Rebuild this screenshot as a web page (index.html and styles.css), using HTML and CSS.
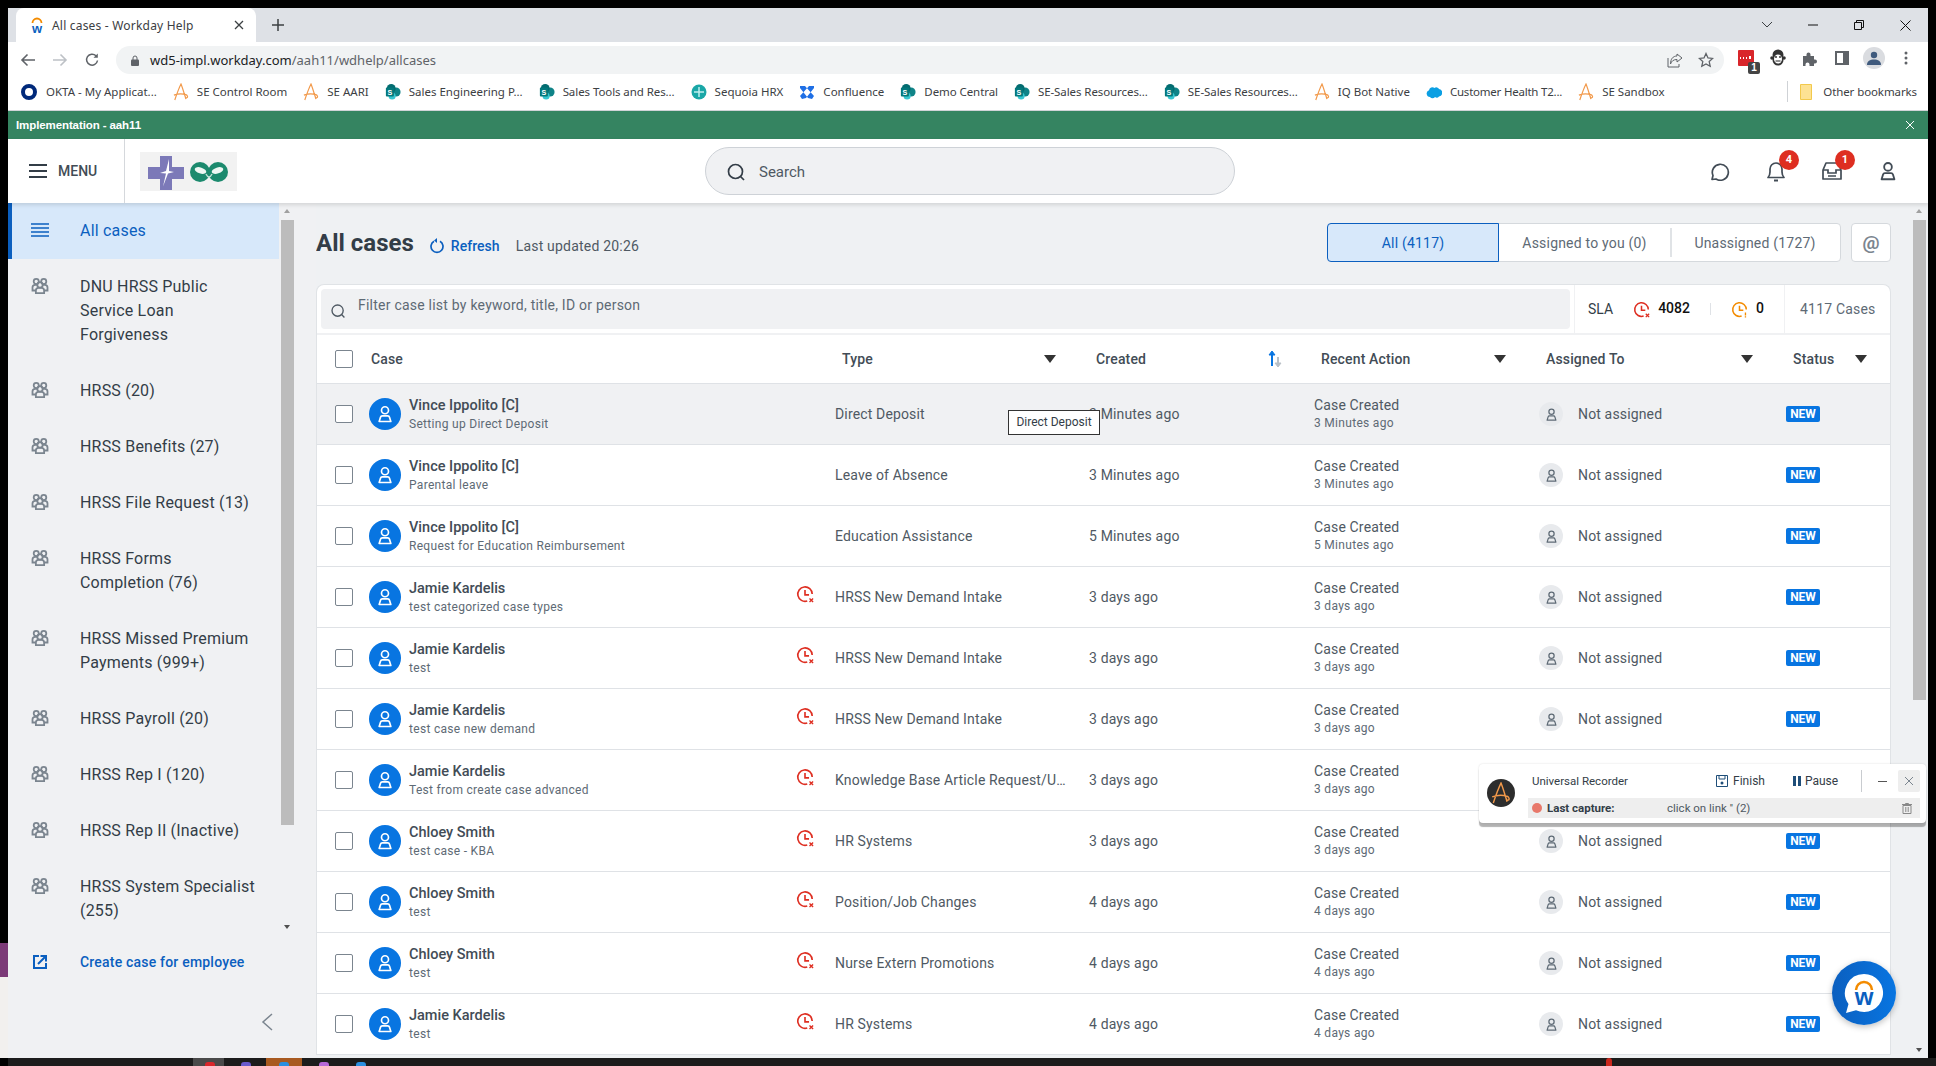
FILE: index.html
```html
<!DOCTYPE html>
<html lang="en">
<head>
  <meta charset="UTF-8" />
  <title>All cases - Workday Help</title>
  <link rel="stylesheet" href="styles.css">
</head>
<body>
  <svg class="defs" width="0" height="0">
    <symbol id="i-person" viewBox="0 0 24 24"><circle cx="12" cy="7.5" r="4.2" fill="none" stroke="currentColor" stroke-width="2"/><path d="M5 21l1.600-5.200c.3-1 1-1.500 2-1.500h6.800c1 0 1.700.5 2 1.500L19 21z" fill="none" stroke="currentColor" stroke-width="2" stroke-linejoin="round"/></symbol>
    <symbol id="i-group" viewBox="0 0 24 24"><g fill="none" stroke="currentColor" stroke-width="2.400"><circle cx="7" cy="6" r="3.400"/><circle cx="17" cy="6" r="3.400"/><circle cx="12" cy="10.500" r="3.600"/><path d="M6.500 21.500v-3.500c0-2 1.400-3.500 3.500-3.500h4c2.100 0 3.500 1.500 3.500 3.500v3.500z"/><path d="M6 18H2v-4c0-2 1.400-3.500 3.500-3.500H8M18 18h4v-4c0-2-1.400-3.500-3.500-3.500H16"/></g></symbol>
    <symbol id="i-down" viewBox="0 0 12 8"><path d="M0 0h12L6 8z" fill="currentColor"/></symbol>
    <symbol id="i-late" viewBox="0 0 20 20"><path d="M12.500 17.700A8 8 0 1 1 18 10" fill="none" stroke="currentColor" stroke-width="1.800"/><path d="M10 5.500V11h4.500" fill="none" stroke="currentColor" stroke-width="1.800"/><path d="M15 15l4 4M19 15l-4 4" stroke="currentColor" stroke-width="1.500"/></symbol>
    <symbol id="i-warn" viewBox="0 0 20 20"><path d="M12.500 17.700A8 8 0 1 1 18 10" fill="none" stroke="currentColor" stroke-width="1.800"/><path d="M10 5.500V11h4.500" fill="none" stroke="currentColor" stroke-width="1.800"/><path d="M17 13.500v3.500M17 18v1.500" stroke="currentColor" stroke-width="1.600"/></symbol>
    <symbol id="i-search" viewBox="0 0 20 20"><circle cx="9.500" cy="9.500" r="7" fill="none" stroke="currentColor" stroke-width="1.700"/><path d="M14.500 14.500l3.500 3.500" stroke="currentColor" stroke-width="1.700"/></symbol>
    <symbol id="i-aari" viewBox="0 0 18 20"><path d="M2 19C4 13 7 5 9 1 11 6 13 13 14.500 18M1 13.500c4-1.500 9-2 13.500-.5 2 .7 2.500 3 1 3.500-1.200.3-2-.8-1.500-2" fill="none" stroke="#f2994a" stroke-width="1.300"/></symbol>
    <symbol id="i-share" viewBox="0 0 18 18"><circle cx="12.500" cy="9" r="5" fill="#0f8387"/><circle cx="7" cy="5" r="5" fill="#036c70"/><circle cx="8" cy="13.500" r="4" fill="#37c6d0"/><rect x="1" y="4" width="9" height="10" rx="1" fill="#03787c"/><text x="5.500" y="12" font-size="8" font-weight="700" fill="#fff" text-anchor="middle" font-family="Liberation Sans, sans-serif">S</text></symbol>
  </svg>

  <div class="edge"></div>

  <div class="window">
    <div class="tabstrip">
      <div class="tab">
        <svg class="favicon" viewBox="0 0 14 16"><path d="M2.500 6a4.500 4.500 0 0 1 9 0" fill="none" stroke="#f38b00" stroke-width="1.800"/><text x="7" y="15.500" font-size="13" font-weight="700" fill="#0b5fbf" text-anchor="middle" font-family="Liberation Sans, sans-serif">w</text></svg>
        <span class="tab-title">All cases - Workday Help</span>
        <svg class="tab-close" viewBox="0 0 10 10"><path d="M1 1l8 8M9 1l-8 8" stroke="#3c4043" stroke-width="1.300"/></svg>
      </div>
      <svg class="tab-new" viewBox="0 0 14 14"><path d="M7 1v12M1 7h12" stroke="#3c4043" stroke-width="1.500"/></svg>
      <div class="win-controls">
        <span class="win-btn"><svg width="12" height="8" viewBox="0 0 12 8"><path d="M1 1l5 5 5-5" fill="none" stroke="#3c4043"/></svg></span>
        <span class="win-btn"><svg width="10" height="2" viewBox="0 0 10 2"><path d="M0 1h10" stroke="#111"/></svg></span>
        <span class="win-btn"><svg width="10" height="10" viewBox="0 0 10 10"><path d="M.5 2.500h7v7h-7zM2.500 2.500v-2h7v7h-2" fill="none" stroke="#111"/></svg></span>
        <span class="win-btn"><svg width="11" height="11" viewBox="0 0 11 11"><path d="M.5.500l10 10M10.500.500l-10 10" stroke="#111"/></svg></span>
      </div>
    </div>

    <div class="toolbar">
      <svg class="nav-icon" viewBox="0 0 16 14"><path d="M15 7H2M7.500 1.500L2 7l5.500 5.500" fill="none" stroke="#5f6368" stroke-width="1.600"/></svg>
      <svg class="nav-icon" viewBox="0 0 16 14"><path d="M1 7h13M8.500 1.500L14 7l-5.500 5.500" fill="none" stroke="#bdc1c6" stroke-width="1.600"/></svg>
      <svg class="nav-icon" viewBox="0 0 14 14"><path d="M12.500 7.500A5.500 5.500 0 1 1 11 2.800" fill="none" stroke="#5f6368" stroke-width="1.500"/><path d="M12.800.500v4.300H8.500z" fill="#5f6368"/></svg>
      <div class="omnibox">
        <svg class="lock" viewBox="0 0 8 11"><path d="M2 5V3a2 2 0 0 1 4 0v2" fill="none" stroke="#5f6368"/><rect y="4.500" width="8" height="6.500" rx="1" fill="#5f6368"/></svg>
        <span class="url"><b>wd5-impl.workday.com</b>/aah11/wdhelp/allcases</span>
        <svg class="omni-icon" viewBox="0 0 16 16"><path d="M10 2l5 4-5 4V7.500C6.500 7.500 4.500 9 3.500 12c0-5 2.500-8 6.500-8z" fill="none" stroke="#5f6368"/><path d="M1 6v9h11v-3" fill="none" stroke="#5f6368"/></svg>
        <svg class="omni-icon omni-star" viewBox="0 0 16 16"><path d="M8 1.500l2 4.400 4.700.5-3.500 3.200 1 4.700L8 11.900l-4.200 2.400 1-4.700L1.300 6.400 6 5.900z" fill="none" stroke="#5f6368" stroke-width="1.300"/></svg>
      </div>
      <div class="ext-row">
        <span class="ext">
          <svg width="16" height="16" viewBox="0 0 16 16"><rect width="16" height="16" rx="1" fill="#d9262b"/><path d="M2 8h1M5 8h1M8 8h1M12 6v3" stroke="#fff" stroke-width="2"/></svg>
          <span class="ext-count">1</span>
        </span>
        <span class="ext"><svg width="16" height="18" viewBox="0 0 16 18"><circle cx="8" cy="6" r="5.500" fill="#333"/><circle cx="2" cy="9" r="1.800" fill="#333"/><circle cx="14" cy="9" r="1.800" fill="#333"/><ellipse cx="8" cy="11" rx="5.500" ry="5.500" fill="#333"/><ellipse cx="8" cy="10" rx="4" ry="4.500" fill="#fff"/><circle cx="6" cy="8" r=".9" fill="#222"/><circle cx="10" cy="8" r=".9" fill="#222"/><path d="M5.500 12h5" stroke="#222"/></svg></span>
        <span class="ext"><svg width="15" height="15" viewBox="0 0 15 15"><path d="M0 5h3.500V3.500a2 2 0 0 1 4 0V5H11v3.500h1a2 2 0 0 1 0 4h-1V15H6.500v-1.500a2 2 0 0 0-4 0V15H0z" fill="#5f6368"/></svg></span>
        <span class="ext"><svg width="14" height="14" viewBox="0 0 14 14"><path d="M1 1h12v12H1z" fill="none" stroke="#5f6368" stroke-width="2"/><rect x="8" y="1" width="5" height="12" fill="#5f6368"/></svg></span>
        <span class="ext"><span class="profile"><svg width="14" height="14" viewBox="0 0 14 14"><circle cx="7" cy="4" r="3.200" fill="#3f5a7d"/><path d="M0 14c0-4 3-5.500 7-5.500s7 1.500 7 5.500z" fill="#3f5a7d"/></svg></span></span>
        <span class="ext"><svg width="4" height="14" viewBox="0 0 4 14"><circle cx="2" cy="2" r="1.500" fill="#5f6368"/><circle cx="2" cy="7" r="1.500" fill="#5f6368"/><circle cx="2" cy="12" r="1.500" fill="#5f6368"/></svg></span>
      </div>
    </div>

    <div class="bookmarks">
      <span class="bm bm-okta"><svg class="bm-icon" viewBox="0 0 16 16"><circle cx="8" cy="8" r="6" fill="none" stroke="#00297a" stroke-width="4"/></svg>OKTA - My Applicat...</span>
      <span class="bm"><svg class="bm-icon"><use href="#i-aari"/></svg>SE Control Room</span>
      <span class="bm"><svg class="bm-icon"><use href="#i-aari"/></svg>SE AARI</span>
      <span class="bm"><svg class="bm-icon"><use href="#i-share"/></svg>Sales Engineering P...</span>
      <span class="bm bm-trim"><svg class="bm-icon"><use href="#i-share"/></svg>Sales Tools and Res...</span>
      <span class="bm"><svg class="bm-icon" viewBox="0 0 16 16"><circle cx="8" cy="8" r="7.500" fill="#1aa7a7"/><path d="M8 3v10M3 8h10" stroke="#bfeeee" stroke-width="1.500"/></svg>Sequoia HRX</span>
      <span class="bm"><svg class="bm-icon" viewBox="0 0 16 16"><path d="M1 2l5 0 9 10-2 3-4-1-8-10zM15 2l-5 0-9 10 2 3 4-1 8-10z" fill="#1f6fe5"/></svg>Confluence</span>
      <span class="bm bm-trim"><svg class="bm-icon"><use href="#i-share"/></svg>Demo Central</span>
      <span class="bm bm-trim"><svg class="bm-icon"><use href="#i-share"/></svg>SE-Sales Resources...</span>
      <span class="bm bm-trim"><svg class="bm-icon"><use href="#i-share"/></svg>SE-Sales Resources...</span>
      <span class="bm"><svg class="bm-icon"><use href="#i-aari"/></svg>IQ Bot Native</span>
      <span class="bm bm-tight"><svg class="bm-icon" viewBox="0 0 16 16"><path d="M4 13a3.500 3.500 0 0 1-1-6.800A3.500 3.500 0 0 1 8.500 4a3 3 0 0 1 4.500 1 3.800 3.800 0 0 1 0 7.500 3 3 0 0 1-4 .5 3 3 0 0 1-5 0z" fill="#0b9fe3"/></svg>Customer Health T2...</span>
      <span class="bm"><svg class="bm-icon"><use href="#i-aari"/></svg>SE Sandbox</span>
      <span class="bm-sep"></span>
      <span class="bm bm-other"><svg class="bm-folder" viewBox="0 0 12 16"><path d="M.5.500h11v15H.500z" fill="#fde293" stroke="#f2c94c"/></svg>Other bookmarks</span>
    </div>

    <div class="env-banner">
      <span>Implementation - aah11</span>
      <svg width="10" height="10" viewBox="0 0 10 10"><path d="M1 1l8 8M9 1l-8 8" stroke="#fff"/></svg>
    </div>

    <header class="app-header">
      <div class="menu-btn">
        <svg width="18" height="14" viewBox="0 0 18 14"><path d="M0 1h18M0 7h18M0 13h18" stroke="#333d47" stroke-width="1.800"/></svg>
        <span>MENU</span>
      </div>
      <div class="tenant-logo">
        <svg width="97" height="39" viewBox="0 0 97 39"><rect width="97" height="39" fill="#f2f2f2"/><path d="M8 15h12V4h12v11h12v12H32v11H20V27H8z" fill="#7c79b8"/><path d="M29 7l-3 12-6 2 6 .5-3 13 5-13 6-1.500-5-1z" fill="#fff"/><circle cx="60" cy="20" r="10" fill="#1c8a6e"/><circle cx="78" cy="20" r="10" fill="#1c8a6e"/><ellipse cx="60.500" cy="18.500" rx="6" ry="3" transform="rotate(18 60.500 18.500)" fill="#eef7f3"/><ellipse cx="77.500" cy="18.500" rx="6" ry="3" transform="rotate(-18 77.500 18.500)" fill="#eef7f3"/><path d="M66 22c1 2 2 3 3 3s2-1 3-3" fill="none" stroke="#bfe3d6" stroke-width="1.500"/></svg>
      </div>
      <div class="search-box">
        <svg class="search-icon"><use href="#i-search"/></svg>
        <span>Search</span>
      </div>
      <div class="header-icons">
        <span class="head-icon"><svg width="20" height="20" viewBox="0 0 20 20"><path d="M2 18.500l1-4A8 8 0 1 1 6 18z" fill="none" stroke="currentColor" stroke-width="1.700" stroke-linejoin="round"/></svg></span>
        <span class="head-icon"><svg width="18" height="21" viewBox="0 0 18 21"><path d="M1 16.500c1.500-1.500 2-3 2-5.500V8a6 6 0 0 1 12 0v3c0 2.500.5 4 2 5.500z" fill="none" stroke="currentColor" stroke-width="1.700" stroke-linejoin="round"/><path d="M7 19.500h4" stroke="currentColor" stroke-width="2"/></svg><b class="badge">4</b></span>
        <span class="head-icon"><svg width="20" height="18" viewBox="0 0 20 18"><path d="M1 8l3-7h12l3 7v9H1z" fill="none" stroke="currentColor" stroke-width="1.700" stroke-linejoin="round"/><path d="M1 8h5v3h8V8h5M6 14h8" fill="none" stroke="currentColor" stroke-width="1.700"/></svg><b class="badge">1</b></span>
        <span class="head-icon"><svg width="22" height="22"><use href="#i-person"/></svg></span>
      </div>
    </header>

    <div class="main">
      <aside class="sidebar">
        <div class="side-scroll">
          <div class="side-list">
            <div class="side-item active"><svg class="side-icon" viewBox="0 0 18 14"><path d="M0 1h18M0 5h18M0 9h18M0 13h18" stroke="#0b5fbf" stroke-width="1.600"/></svg><span>All cases</span></div>
            <div class="side-item"><svg class="side-icon"><use href="#i-group"/></svg><span>DNU HRSS Public Service Loan Forgiveness</span></div>
            <div class="side-item"><svg class="side-icon"><use href="#i-group"/></svg><span>HRSS (20)</span></div>
            <div class="side-item"><svg class="side-icon"><use href="#i-group"/></svg><span>HRSS Benefits (27)</span></div>
            <div class="side-item"><svg class="side-icon"><use href="#i-group"/></svg><span>HRSS File Request (13)</span></div>
            <div class="side-item"><svg class="side-icon"><use href="#i-group"/></svg><span>HRSS Forms Completion (76)</span></div>
            <div class="side-item"><svg class="side-icon"><use href="#i-group"/></svg><span>HRSS Missed Premium Payments (999+)</span></div>
            <div class="side-item"><svg class="side-icon"><use href="#i-group"/></svg><span>HRSS Payroll (20)</span></div>
            <div class="side-item"><svg class="side-icon"><use href="#i-group"/></svg><span>HRSS Rep I (120)</span></div>
            <div class="side-item"><svg class="side-icon"><use href="#i-group"/></svg><span>HRSS Rep II (Inactive)</span></div>
            <div class="side-item"><svg class="side-icon"><use href="#i-group"/></svg><span>HRSS System Specialist (255)</span></div>
          </div>
          <div class="scrollbar side-bar">
            <i class="arrow-up"></i>
            <div class="thumb"></div>
            <i class="arrow-down"></i>
          </div>
        </div>
        <div class="side-create">
          <svg width="14" height="14" viewBox="0 0 14 14"><path d="M6 1H1v12h12V8" fill="none" stroke="#0b5fbf" stroke-width="2"/><path d="M5 9l7-7M7.500 1H13v5.500" fill="none" stroke="#0b5fbf" stroke-width="2"/></svg>
          <span>Create case for employee</span>
        </div>
        <div class="side-collapse">
          <svg width="12" height="18" viewBox="0 0 12 18"><path d="M11 1L2 9l9 8" fill="none" stroke="#7b858f" stroke-width="1.500"/></svg>
        </div>
      </aside>

      <main class="content">
        <div class="title-row">
          <h1>All cases</h1>
          <span class="refresh">
            <svg width="14" height="16" viewBox="0 0 14 16"><path d="M4 3.200A6 6 0 1 0 10 3.200" fill="none" stroke="#0b5fbf" stroke-width="1.700"/><path d="M7 0v5L4 2.500z" fill="#0b5fbf"/></svg>
            Refresh
          </span>
          <span class="updated">Last updated 20:26</span>
          <div class="tabs">
            <span class="tab-btn selected">All (4117)</span>
            <span class="tab-btn">Assigned to you (0)</span>
            <span class="tab-btn tab-last">Unassigned (1727)</span>
          </div>
          <span class="at-btn">@</span>
        </div>

        <section class="card">
          <div class="filter-row">
            <div class="filter-box">
              <svg class="filter-icon"><use href="#i-search"/></svg>
              <span>Filter case list by keyword, title, ID or person</span>
            </div>
            <div class="sla">
              <span class="sla-label">SLA</span>
              <svg class="sla-icon red"><use href="#i-late"/></svg>
              <b>4082</b>
              <i class="sla-sep"></i>
              <svg class="sla-icon orange"><use href="#i-warn"/></svg>
              <b>0</b>
            </div>
            <div class="case-count">4117 Cases</div>
          </div>

          <div class="row head">
            <span class="check"></span>
            <span class="cell-head head-case">Case</span>
            <span class="cell-head">Type<svg class="dd"><use href="#i-down"/></svg></span>
            <span class="cell-head">Created<svg class="sort" viewBox="0 0 14 18"><path d="M4 16V4" stroke="#0875e1" stroke-width="2"/><path d="M1 5l3-4 3 4z" fill="#0875e1" stroke="#0875e1" stroke-linejoin="round"/><path d="M10 7v8" stroke="#b9c0c7" stroke-width="2"/><path d="M7 13l3 4 3-4z" fill="#b9c0c7" stroke="#b9c0c7" stroke-linejoin="round"/></svg></span>
            <span class="cell-head">Recent Action<svg class="dd"><use href="#i-down"/></svg></span>
            <span class="cell-head">Assigned To<svg class="dd"><use href="#i-down"/></svg></span>
            <span class="cell-head head-status">Status<svg class="dd"><use href="#i-down"/></svg></span>
          </div>

          <div class="row hover">
            <span class="check"></span>
            <div class="who"><span class="avatar"><svg><use href="#i-person"/></svg></span><div><div class="name">Vince Ippolito [C]</div><div class="sub">Setting up Direct Deposit</div></div></div>
            <span class="cell">Direct Deposit</span>
            <span class="cell">3 Minutes ago</span>
            <div><div class="cell">Case Created</div><div class="sub">3 Minutes ago</div></div>
            <div class="assigned"><span class="no-avatar"><svg><use href="#i-person"/></svg></span>Not assigned</div>
            <span class="new">NEW</span>
            <span class="tooltip">Direct Deposit</span>
          </div>
          <div class="row">
            <span class="check"></span>
            <div class="who"><span class="avatar"><svg><use href="#i-person"/></svg></span><div><div class="name">Vince Ippolito [C]</div><div class="sub">Parental leave</div></div></div>
            <span class="cell">Leave of Absence</span>
            <span class="cell">3 Minutes ago</span>
            <div><div class="cell">Case Created</div><div class="sub">3 Minutes ago</div></div>
            <div class="assigned"><span class="no-avatar"><svg><use href="#i-person"/></svg></span>Not assigned</div>
            <span class="new">NEW</span>
          </div>
          <div class="row">
            <span class="check"></span>
            <div class="who"><span class="avatar"><svg><use href="#i-person"/></svg></span><div><div class="name">Vince Ippolito [C]</div><div class="sub">Request for Education Reimbursement</div></div></div>
            <span class="cell">Education Assistance</span>
            <span class="cell">5 Minutes ago</span>
            <div><div class="cell">Case Created</div><div class="sub">5 Minutes ago</div></div>
            <div class="assigned"><span class="no-avatar"><svg><use href="#i-person"/></svg></span>Not assigned</div>
            <span class="new">NEW</span>
          </div>
          <div class="row">
            <span class="check"></span>
            <div class="who"><span class="avatar"><svg><use href="#i-person"/></svg></span><div><div class="name">Jamie Kardelis</div><div class="sub">test categorized case types</div></div><svg class="late"><use href="#i-late"/></svg></div>
            <span class="cell">HRSS New Demand Intake</span>
            <span class="cell">3 days ago</span>
            <div><div class="cell">Case Created</div><div class="sub">3 days ago</div></div>
            <div class="assigned"><span class="no-avatar"><svg><use href="#i-person"/></svg></span>Not assigned</div>
            <span class="new">NEW</span>
          </div>
          <div class="row">
            <span class="check"></span>
            <div class="who"><span class="avatar"><svg><use href="#i-person"/></svg></span><div><div class="name">Jamie Kardelis</div><div class="sub">test</div></div><svg class="late"><use href="#i-late"/></svg></div>
            <span class="cell">HRSS New Demand Intake</span>
            <span class="cell">3 days ago</span>
            <div><div class="cell">Case Created</div><div class="sub">3 days ago</div></div>
            <div class="assigned"><span class="no-avatar"><svg><use href="#i-person"/></svg></span>Not assigned</div>
            <span class="new">NEW</span>
          </div>
          <div class="row">
            <span class="check"></span>
            <div class="who"><span class="avatar"><svg><use href="#i-person"/></svg></span><div><div class="name">Jamie Kardelis</div><div class="sub">test case new demand</div></div><svg class="late"><use href="#i-late"/></svg></div>
            <span class="cell">HRSS New Demand Intake</span>
            <span class="cell">3 days ago</span>
            <div><div class="cell">Case Created</div><div class="sub">3 days ago</div></div>
            <div class="assigned"><span class="no-avatar"><svg><use href="#i-person"/></svg></span>Not assigned</div>
            <span class="new">NEW</span>
          </div>
          <div class="row">
            <span class="check"></span>
            <div class="who"><span class="avatar"><svg><use href="#i-person"/></svg></span><div><div class="name">Jamie Kardelis</div><div class="sub">Test from create case advanced</div></div><svg class="late"><use href="#i-late"/></svg></div>
            <span class="cell clip">Knowledge Base Article Request/Update</span>
            <span class="cell">3 days ago</span>
            <div><div class="cell">Case Created</div><div class="sub">3 days ago</div></div>
            <div class="assigned"><span class="no-avatar"><svg><use href="#i-person"/></svg></span>Not assigned</div>
            <span class="new">NEW</span>
          </div>
          <div class="row">
            <span class="check"></span>
            <div class="who"><span class="avatar"><svg><use href="#i-person"/></svg></span><div><div class="name">Chloey Smith</div><div class="sub">test case - KBA</div></div><svg class="late"><use href="#i-late"/></svg></div>
            <span class="cell">HR Systems</span>
            <span class="cell">3 days ago</span>
            <div><div class="cell">Case Created</div><div class="sub">3 days ago</div></div>
            <div class="assigned"><span class="no-avatar"><svg><use href="#i-person"/></svg></span>Not assigned</div>
            <span class="new">NEW</span>
          </div>
          <div class="row">
            <span class="check"></span>
            <div class="who"><span class="avatar"><svg><use href="#i-person"/></svg></span><div><div class="name">Chloey Smith</div><div class="sub">test</div></div><svg class="late"><use href="#i-late"/></svg></div>
            <span class="cell">Position/Job Changes</span>
            <span class="cell">4 days ago</span>
            <div><div class="cell">Case Created</div><div class="sub">4 days ago</div></div>
            <div class="assigned"><span class="no-avatar"><svg><use href="#i-person"/></svg></span>Not assigned</div>
            <span class="new">NEW</span>
          </div>
          <div class="row">
            <span class="check"></span>
            <div class="who"><span class="avatar"><svg><use href="#i-person"/></svg></span><div><div class="name">Chloey Smith</div><div class="sub">test</div></div><svg class="late"><use href="#i-late"/></svg></div>
            <span class="cell">Nurse Extern Promotions</span>
            <span class="cell">4 days ago</span>
            <div><div class="cell">Case Created</div><div class="sub">4 days ago</div></div>
            <div class="assigned"><span class="no-avatar"><svg><use href="#i-person"/></svg></span>Not assigned</div>
            <span class="new">NEW</span>
          </div>
          <div class="row">
            <span class="check"></span>
            <div class="who"><span class="avatar"><svg><use href="#i-person"/></svg></span><div><div class="name">Jamie Kardelis</div><div class="sub">test</div></div><svg class="late"><use href="#i-late"/></svg></div>
            <span class="cell">HR Systems</span>
            <span class="cell">4 days ago</span>
            <div><div class="cell">Case Created</div><div class="sub">4 days ago</div></div>
            <div class="assigned"><span class="no-avatar"><svg><use href="#i-person"/></svg></span>Not assigned</div>
            <span class="new">NEW</span>
          </div>
        </section>

        <div class="scrollbar page-bar">
          <i class="arrow-up"></i>
          <div class="thumb"></div>
          <i class="arrow-down"></i>
        </div>
      </main>
    </div>

    <!-- recorder extension floats over the list -->
    <div class="recorder">
      <span class="rec-logo"><svg width="28" height="28"><use href="#i-aari" x="4" y="3" width="20" height="22"/></svg></span>
      <div class="rec-body">
        <div class="rec-top">
          <span class="rec-title">Universal Recorder</span>
          <span class="rec-action rec-finish"><svg width="12" height="12" viewBox="0 0 12 12"><path d="M.5.500h11v11H.500z" fill="none" stroke="#1f4e79"/><path d="M3 1v3h6V1" fill="none" stroke="#1f4e79"/><circle cx="6" cy="8" r="1.500" fill="#1f4e79"/></svg>Finish</span>
          <span class="rec-action rec-pause"><svg width="8" height="10" viewBox="0 0 8 10"><path d="M0 0h3v10H0zM5 0h3v10H5z" fill="#1f4e79"/></svg>Pause</span>
          <span class="rec-sep"></span>
          <span class="rec-min"></span>
          <span class="rec-close"><svg width="8" height="8" viewBox="0 0 8 8"><path d="M0 0l8 8M8 0L0 8" stroke="#7b858f"/></svg></span>
        </div>
        <div class="rec-capture">
          <i class="rec-dot"></i>
          <b>Last capture:</b>
          <span class="rec-text">click on link '' (2)</span>
          <svg width="10" height="11" viewBox="0 0 10 11"><path d="M1 2.500h8v8H1zM0 1.500h10M3.500 1.500V.500h3v1M3.800 4v5M6.200 4v5" fill="none" stroke="#888"/></svg>
        </div>
      </div>
    </div>

    <div class="chat-bubble">
      <svg width="44" height="44" viewBox="0 0 44 44"><path d="M22 3a19 19 0 1 1-8 36.200L4 42l2.500-9A19 19 0 0 1 22 3z" fill="#fff"/><path d="M14 19a8 8 0 0 1 16 0" fill="none" stroke="#f38b00" stroke-width="2.500"/><text x="22" y="34" font-size="24" font-weight="700" fill="#0b5fbf" text-anchor="middle" font-family="Liberation Sans, sans-serif">w</text></svg>
    </div>
  </div>

  <div class="taskbar">
    <i class="task-active"></i>
    <i class="task-orange"></i>
    <i class="task-dot dot-a"></i>
    <i class="task-dot dot-b"></i>
    <i class="task-dot dot-c"></i>
    <i class="task-dot dot-d"></i>
    <i class="task-dot dot-e"></i>
    <i class="task-dot dot-f"></i>
  </div>
</body>
</html>
```

FILE: styles.css
```css
* {
  box-sizing: border-box;
}
html, body {
  margin: 0;
  height: 1066px;
  overflow: hidden;
  background: #000;
}
body {
  position: relative;
  padding-top: 8px;
  font-family: Roboto, "Liberation Sans", sans-serif;
  color: #333d47;
}
.defs {
  position: absolute;
}
.edge {
  position: absolute;
  left: 0;
  top: 943px;
  width: 8px;
  height: 115px;
  background: linear-gradient(#7c3a77 0 34px, #f2f0ee 34px);
}
.window {
  position: relative;
  margin-left: 8px;
  width: 1920px;
  height: 1050px;
  display: flex;
  flex-direction: column;
  overflow: hidden;
  background: #fff;
}

/* browser chrome */
.tabstrip {
  height: 34px;
  flex: none;
  display: flex;
  align-items: center;
  padding-left: 8px;
  background: #dee1e6;
}
.tab {
  width: 240px;
  height: 34px;
  display: flex;
  align-items: center;
  background: #fff;
  border-radius: 8px 8px 0 0;
  padding: 0 12px 0 14px;
}
.favicon {
  width: 14px;
  height: 16px;
}
.tab-title {
  margin-left: 8px;
  font: 12px "Noto Sans", sans-serif;
  letter-spacing: .2px;
  color: #3c4043;
}
.tab-close {
  width: 10px;
  height: 10px;
  margin-left: auto;
}
.tab-new {
  width: 14px;
  height: 14px;
  margin-left: 15px;
}
.win-controls {
  margin-left: auto;
  display: flex;
}
.win-btn {
  width: 46px;
  height: 34px;
  display: flex;
  align-items: center;
  justify-content: center;
}
.toolbar {
  height: 32px;
  flex: none;
  display: flex;
  align-items: flex-end;
  padding-left: 12px;
}
.nav-icon {
  width: 16px;
  height: 14px;
  margin: 0 16px 7px 0;
}
.omnibox {
  width: 1608px;
  height: 28px;
  display: flex;
  align-items: center;
  padding: 0 10px 0 15px;
  background: #f1f3f4;
  border-radius: 14px;
}
.lock {
  width: 8px;
  height: 11px;
}
.url {
  margin-left: 11px;
  font: 13px "Noto Sans", sans-serif;
  color: #5f6368;
}
.url b {
  font-weight: 400;
  color: #202124;
}
.omni-icon {
  width: 16px;
  height: 16px;
  margin-left: auto;
}
.omni-star {
  margin-left: 15px;
}
.ext-row {
  margin-left: 6px;
  display: flex;
}
.ext {
  position: relative;
  width: 32px;
  height: 32px;
  display: flex;
  align-items: center;
  justify-content: center;
}
.ext-count {
  position: absolute;
  left: 18px;
  top: 20px;
  width: 12px;
  height: 12px;
  border-radius: 2px;
  background: #444;
  color: #fff;
  font: 700 10px/12px "Liberation Sans", sans-serif;
  text-align: center;
}
.profile {
  width: 22px;
  height: 22px;
  border-radius: 50%;
  background: #dadce0;
  display: flex;
  align-items: center;
  justify-content: center;
}
.bookmarks {
  height: 37px;
  flex: none;
  display: flex;
  align-items: center;
  padding: 0 0 1px 13px;
  border-bottom: 1px solid #d0d3d7;
  font: 11.5px "Noto Sans", sans-serif;
  color: #3c4043;
  white-space: nowrap;
}
.bm {
  display: flex;
  align-items: center;
  margin-right: 16px;
}
.bm-trim {
  letter-spacing: -.08px;
}
.bm-tight {
  letter-spacing: -.22px;
}
.bm-icon {
  width: 16px;
  height: 18px;
  margin-right: 8px;
}
.bm-okta .bm-icon {
  margin-right: 9px;
}
.bm-sep {
  width: 1px;
  height: 21px;
  margin-left: auto;
  background: #cfd2d6;
}
.bm-folder {
  width: 12px;
  height: 16px;
  margin-right: 11px;
}
.bm-other {
  margin: 0 11px 0 12px;
  letter-spacing: -.1px;
}
.env-banner {
  height: 28px;
  flex: none;
  display: flex;
  align-items: center;
  justify-content: space-between;
  padding: 0 13px 0 8px;
  background: #358461;
  color: #fff;
  font: 700 11.5px "Liberation Sans", sans-serif;
  letter-spacing: -0.1px;
}
.app-header {
  position: relative;
  z-index: 2;
  height: 64px;
  flex: none;
  display: flex;
  align-items: center;
  background: #fff;
  box-shadow: 0 2px 4px rgba(0,0,0,.12);
}
.menu-btn {
  width: 117px;
  height: 64px;
  display: flex;
  align-items: center;
  gap: 11px;
  padding-left: 21px;
  border-right: 1px solid #d5d8dc;
  font-size: 14px;
  font-weight: 500;
  color: #424c56;
}
.tenant-logo {
  height: 39px;
  margin-left: 15px;
}
.search-box {
  width: 530px;
  height: 48px;
  margin-left: 468px;
  display: flex;
  align-items: center;
  gap: 13px;
  padding: 1px 0 0 20px;
  background: #f0f1f3;
  border: 1px solid #ced2d7;
  border-radius: 24px;
  font-size: 15px;
  color: #4f5963;
}
.search-icon {
  width: 20px;
  height: 20px;
  color: #333d47;
}
.header-icons {
  margin-left: auto;
  margin-right: 12px;
  display: flex;
  color: #424c56;
}
.head-icon {
  position: relative;
  width: 56px;
  height: 40px;
  display: flex;
  align-items: center;
  justify-content: center;
}
.badge {
  position: absolute;
  left: 31px;
  top: -1px;
  width: 20px;
  height: 20px;
  border-radius: 50%;
  background: #de2e21;
  color: #fff;
  font-size: 11px;
  line-height: 20px;
  text-align: center;
}

/* app layout */
.main {
  flex: 1;
  min-height: 0;
  display: flex;
  background: #eff1f3;
}
.sidebar {
  width: 308px;
  flex: none;
  display: flex;
  flex-direction: column;
  background: #f0f1f3;
}
.side-scroll {
  position: relative;
  height: 736px;
  flex: none;
  overflow: hidden;
}
.side-list {
  width: 271px;
}
.side-item {
  display: grid;
  grid-template-columns: 18px 178px;
  column-gap: 31px;
  padding: 16px 0 16px 23px;
  font-size: 16px;
  line-height: 24px;
  letter-spacing: .2px;
  color: #333d47;
}
.side-item.active {
  height: 56px;
  background: #d7e8fa;
  box-shadow: inset 4px 0 0 #0b5fbf;
  color: #0b5fbf;
}
.side-icon {
  width: 18px;
  height: 18px;
  margin-top: 2px;
  color: #7b858f;
}
.side-create {
  height: 46px;
  flex: none;
  display: flex;
  align-items: center;
  gap: 33px;
  padding-left: 25px;
  font-size: 14px;
  font-weight: 500;
  letter-spacing: .2px;
  color: #0b5fbf;
}
.side-collapse {
  margin: 28px 0 0 253px;
  line-height: 0;
}

/* scrollbars are drawn by hand so they sit where the shot has them */
.scrollbar {
  position: absolute;
  width: 13px;
  top: 0;
  bottom: 0;
}
.side-bar {
  left: 273px;
  bottom: 4px;
}
.page-bar {
  right: 2px;
}
.thumb {
  position: absolute;
  left: 0;
  right: 0;
  top: 17px;
  background: #bcbcbc;
}
.side-bar .thumb {
  height: 605px;
}
.page-bar .thumb {
  height: 480px;
}
.arrow-up, .arrow-down {
  position: absolute;
  left: 3px;
  border-left: 3.5px solid transparent;
  border-right: 3.5px solid transparent;
}
.arrow-up {
  top: 6px;
  border-bottom: 4px solid #a0a0a0;
}
.arrow-down {
  bottom: 6px;
  border-top: 4px solid #505050;
}
.content {
  position: relative;
  flex: 1;
  padding: 20px 37px 0 0;
  overflow: hidden;
}
.title-row {
  height: 39px;
  display: flex;
  align-items: center;
  margin-bottom: 22px;
}
h1 {
  margin: 0;
  font-size: 24px;
  font-weight: 700;
  color: #333d47;
}
.refresh {
  display: flex;
  align-items: center;
  gap: 7px;
  margin: 6px 0 0 16px;
  font-size: 14px;
  font-weight: 500;
  letter-spacing: .05px;
  color: #0b5fbf;
}
.updated {
  margin: 7px 0 0 16px;
  font-size: 14px;
  letter-spacing: .2px;
  color: #4f5963;
}
.tabs {
  margin-left: auto;
  display: flex;
  height: 39px;
  background: #fff;
  border: 1px solid #d5d9dd;
  border-radius: 4px;
}
.tab-btn {
  position: relative;
  width: 171px;
  display: flex;
  align-items: center;
  justify-content: center;
  font-size: 14px;
  letter-spacing: .2px;
  color: #5e6a75;
}
.tab-btn.selected {
  margin: -1px 0 -1px -1px;
  width: 172px;
  border: 1px solid #0b5fbf;
  border-radius: 4px 0 0 4px;
  background: #d7e8fa;
  color: #0b5fbf;
}
.tab-last {
  width: 170px;
}
.tab-last::before {
  content: "";
  position: absolute;
  left: 0;
  top: 4px;
  bottom: 4px;
  width: 2px;
  background: #e0e3e6;
}
.at-btn {
  width: 40px;
  height: 39px;
  margin-left: 10px;
  display: flex;
  align-items: center;
  justify-content: center;
  background: #fff;
  border: 1px solid #d5d9dd;
  border-radius: 4px;
  font-size: 19px;
  font-weight: 700;
  color: #7b858f;
}
.card {
  width: 1575px;
  background: #fff;
  border: 1px solid #e0e3e6;
  border-bottom: 0;
  border-radius: 8px 8px 0 0;
}
.filter-row {
  height: 50px;
  display: flex;
  border-bottom: 2px solid #f0f1f3;
}
.filter-box {
  width: 1249px;
  height: 40px;
  margin: 4px 0 0 4px;
  display: flex;
  align-items: center;
  gap: 12px;
  padding: 0 0 8px 9px;
  background: #f0f1f3;
  border-radius: 4px;
  font-size: 14px;
  letter-spacing: .23px;
  color: #5e6a75;
}
.filter-icon {
  width: 16px;
  height: 16px;
  margin-top: 12px;
  color: #4f5963;
}
.sla {
  width: 211px;
  margin-left: 4px;
  display: flex;
  align-items: center;
  padding-left: 13px;
  border-left: 1px solid #f0f1f3;
  border-right: 1px solid #f0f1f3;
  font-size: 14px;
}
.sla b {
  font-weight: 500;
  color: #111;
  margin-bottom: 2px;
}
.sla-label {
  margin-right: 20px;
}
.sla-icon {
  width: 17px;
  height: 17px;
  margin: 1px 8px 0 0;
}
.red, .late {
  color: #de2e21;
}
.orange {
  color: #f38b00;
}
.sla-sep {
  width: 1px;
  height: 12px;
  margin: 0 20px;
  background: #dfe2e6;
}
.case-count {
  padding: 16px 0 0 15px;
  font-size: 14px;
  letter-spacing: .2px;
  color: #5e6a75;
}

/* table rows share one set of columns */
.row {
  position: relative;
  display: grid;
  grid-template-columns: 34px 466px 254px 225px 225px 247px 1fr;
  align-items: center;
  height: 61px;
  padding-left: 18px;
  border-bottom: 1px solid #dfe2e6;
}
.row.head {
  height: 49px;
  border-bottom: 1px solid #dfe2e6;
}
.row.hover {
  background: #f0f1f3;
}
.check {
  width: 18px;
  height: 18px;
  background: #fff;
  border: 1px solid #7b858f;
  border-radius: 2px;
}
.cell-head {
  display: flex;
  align-items: center;
  justify-content: space-between;
  padding: 0 33px 0 7px;
  font-size: 14px;
  font-weight: 500;
  letter-spacing: .15px;
  color: #424c56;
}
.head-case {
  padding-left: 2px;
}
.head-status {
  padding-right: 23px;
}
.dd {
  width: 12px;
  height: 8px;
  color: #333;
}
.sort {
  width: 14px;
  height: 18px;
  margin-right: -1px;
}
.who {
  position: relative;
  display: flex;
  align-items: center;
  gap: 8px;
}
.avatar {
  width: 32px;
  height: 32px;
  display: flex;
  align-items: center;
  justify-content: center;
  border-radius: 50%;
  background: #0875e1;
  color: #fff;
}
.avatar svg {
  width: 20px;
  height: 20px;
}
.name {
  font-size: 14.5px;
  font-weight: 500;
  line-height: 18px;
  padding-top: 1px;
  height: 19px;
  color: #424c56;
}
.sub {
  font-size: 12px;
  line-height: 18px;
  letter-spacing: .3px;
  color: #5e6a75;
}
.cell {
  font-size: 14px;
  line-height: 18px;
  letter-spacing: .15px;
  color: #4f5963;
}
.clip {
  width: 236px;
  overflow: hidden;
  white-space: nowrap;
  text-overflow: ellipsis;
}
.late {
  position: absolute;
  left: 427px;
  top: 50%;
  width: 18px;
  height: 18px;
  margin-top: -12px;
}
.assigned {
  display: flex;
  align-items: center;
  gap: 15px;
  font-size: 14px;
  letter-spacing: .15px;
  color: #4f5963;
}
.no-avatar {
  width: 24px;
  height: 24px;
  display: flex;
  align-items: center;
  justify-content: center;
  border-radius: 50%;
  background: #e8eaed;
  color: #5e6a75;
}
.no-avatar svg {
  width: 15px;
  height: 15px;
}
.new {
  width: 34px;
  height: 16px;
  background: #0875e1;
  border-radius: 2px;
  color: #fff;
  font-size: 12px;
  font-weight: 700;
  line-height: 16px;
  text-align: center;
}
.tooltip {
  position: absolute;
  left: 691px;
  top: 26px;
  width: 92px;
  height: 25px;
  background: #fff;
  border: 1px solid #333;
  font-size: 12px;
  line-height: 23px;
  text-align: center;
}

/* floating things */
.recorder {
  position: absolute;
  left: 1471px;
  top: 756px;
  width: 447px;
  height: 59px;
  display: flex;
  background: #fff;
  border-radius: 4px;
  box-shadow: 0 4px 1px rgba(0,0,0,.3), 0 0 2px rgba(0,0,0,.15);
  font-size: 11.5px;
}
.rec-logo {
  width: 28px;
  height: 28px;
  margin: 15px 0 0 8px;
  border-radius: 50%;
  background: #2d2d2d;
  line-height: 0;
}
.rec-body {
  margin: 6px 0 0 13px;
  width: 392px;
}
.rec-top {
  height: 22px;
  display: flex;
  align-items: center;
  padding-left: 4px;
}
.rec-title {
  width: 185px;
}
.rec-action {
  display: flex;
  align-items: center;
  gap: 5px;
  font-size: 12px;
}
.rec-pause {
  margin-left: 28px;
  gap: 4px;
}
.rec-sep {
  width: 1px;
  height: 22px;
  margin-left: 23px;
  background: #c9ccd0;
}
.rec-min {
  width: 9px;
  height: 1px;
  margin-left: 16px;
  background: #555;
}
.rec-close {
  width: 22px;
  height: 22px;
  margin-left: 11px;
  display: flex;
  align-items: center;
  justify-content: center;
  background: #eee;
  border-radius: 2px;
}
.rec-capture {
  height: 20px;
  margin-top: 6px;
  display: flex;
  align-items: center;
  padding: 0 8px 0 4px;
  background: #eee;
}
.rec-dot {
  width: 10px;
  height: 10px;
  border-radius: 50%;
  background: #e8786a;
  margin-right: 5px;
}
.rec-capture b {
  width: 120px;
  font-weight: 700;
}
.rec-text {
  flex: 1;
  color: #4f5963;
}
.chat-bubble {
  position: absolute;
  left: 1824px;
  top: 953px;
  width: 64px;
  height: 64px;
  display: flex;
  align-items: center;
  justify-content: center;
  border-radius: 50%;
  background: linear-gradient(90deg, #0b5fbf, #0875e1);
  box-shadow: 0 2px 6px rgba(0,0,0,.25);
}
.taskbar {
  position: relative;
  height: 8px;
  margin-left: 8px;
  background: #1c1c1c;
  overflow: hidden;
}
.task-active, .task-orange, .task-dot {
  position: absolute;
  top: 0;
  height: 8px;
}
.task-active {
  left: 185px;
  width: 31px;
  background: #4a4a4a;
}
.task-orange {
  left: 258px;
  width: 36px;
  background: #a85a20;
}
.task-dot {
  top: 4px;
  width: 10px;
  height: 4px;
  border-radius: 3px 3px 0 0;
}
.dot-a {
  left: 197px;
  background: #d9262b;
}
.dot-b {
  left: 233px;
  background: #6a5acd;
}
.dot-c {
  left: 271px;
  background: #2a8fe0;
}
.dot-d {
  left: 311px;
  background: #b768d8;
}
.dot-e {
  left: 348px;
  background: #2a8fe0;
}
.dot-f {
  left: 1598px;
  top: 0;
  width: 6px;
  height: 8px;
  background: #c9281e;
}
```
